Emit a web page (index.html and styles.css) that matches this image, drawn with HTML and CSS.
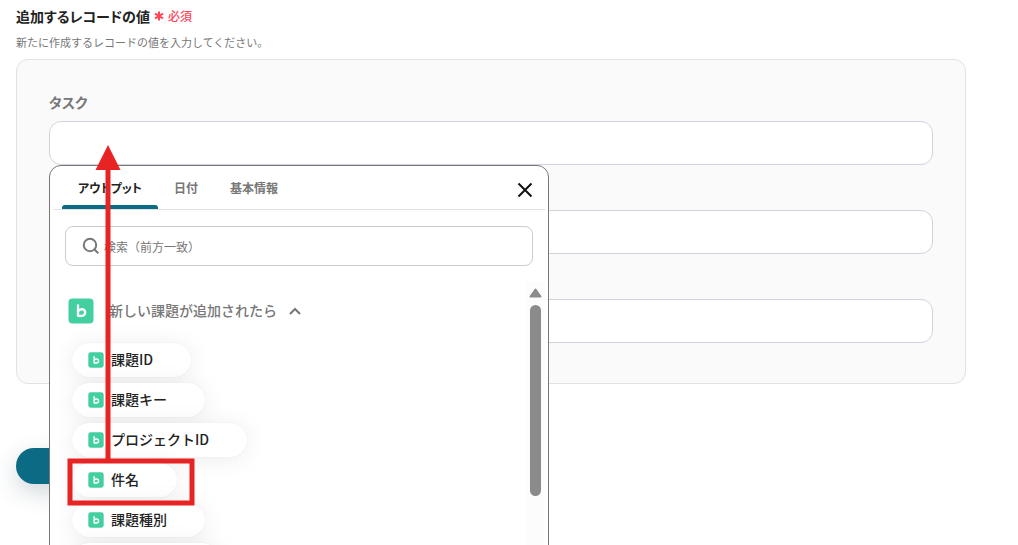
FILE: index.html
```html
<!DOCTYPE html>
<html lang="ja">
<head>
<meta charset="utf-8">
<meta name="viewport" content="width=device-width, initial-scale=1">
<title>追加するレコードの値</title>
<link rel="stylesheet" href="styles.css">
</head>
<body>
<svg class="sprite" aria-hidden="true">
  <symbol id="app" viewBox="0 0 26 26">
    <rect x=".5" y=".5" width="25" height="25" rx="4" fill="#43cf9f"/>
    <path d="M10 7.500v10.300h3.500c4.600 0 5-6 .4-6.600q-1.700 0-2.700 1.200" fill="none" stroke="#fff" stroke-width="2.300" stroke-linecap="round" stroke-linejoin="round"/>
  </symbol>
</svg>
<main class="page">
  <h1 class="title">追加するレコードの値 <span class="required"><svg class="star" viewBox="0 0 10 10" aria-hidden="true"><path d="M5 .5v9M1 2.700l8 4.600M9 2.700L1 7.300"/></svg>必須</span></h1>
  <p class="hint">新たに作成するレコードの値を入力してください。</p>
  <form class="form">
    <section class="panel">
      <div class="field">
        <label class="label" for="task">タスク</label>
        <input class="input" id="task" type="text">
        <div class="popup">
          <div class="tabs" role="tablist">
            <button class="tab active" type="button" role="tab" aria-selected="true">アウトプット</button>
            <button class="tab" type="button" role="tab">日付</button>
            <button class="tab" type="button" role="tab">基本情報</button>
            <button class="close" type="button" aria-label="閉じる"><svg viewBox="0 0 16 16"><path d="M1.500 1.500l13 13M14.500 1.500l-13 13"/></svg></button>
          </div>
          <div class="search">
            <svg class="lens" viewBox="0 0 18 18" aria-hidden="true"><circle cx="8" cy="8" r="6.200"/><path d="M12.500 12.500L16.300 16.300"/></svg>
            <input class="search-input" type="text" aria-label="検索" placeholder="検索（前方一致）">
          </div>
          <div class="results">
            <div class="list">
              <button class="group" type="button">
                <svg class="app-large" aria-hidden="true"><use href="#app"/></svg>
                <span class="group-name">新しい課題が追加されたら</span>
                <svg class="chevron" viewBox="0 0 12 8" aria-hidden="true"><path d="M1 7L6 2l5 5"/></svg>
              </button>
              <div class="chips">
                <button class="chip" type="button"><svg class="app-small" aria-hidden="true"><use href="#app"/></svg>課題ID</button>
                <button class="chip" type="button"><svg class="app-small" aria-hidden="true"><use href="#app"/></svg>課題キー</button>
                <button class="chip" type="button"><svg class="app-small" aria-hidden="true"><use href="#app"/></svg>プロジェクトID</button>
                <button class="chip" type="button"><svg class="app-small" aria-hidden="true"><use href="#app"/></svg>件名</button>
                <button class="chip" type="button"><svg class="app-small" aria-hidden="true"><use href="#app"/></svg>課題種別</button>
                <button class="chip wide" type="button" aria-label="次の項目"></button>
              </div>
            </div>
            <div class="scrollbar" aria-hidden="true">
              <svg class="scroll-up" viewBox="0 0 13 10"><path d="M6.500 1.500L11.500 8.500H1.500z"/></svg>
              <div class="thumb"></div>
            </div>
          </div>
          <svg class="arrow" viewBox="0 0 128 361" aria-hidden="true">
            <path class="shaft" d="M41 20v296"/>
            <path class="head" d="M41 0l12.500 25h-25z"/>
            <rect class="frame" x="3" y="316" width="122" height="42"/>
          </svg>
        </div>
      </div>
      <div class="field">
        <label class="label" for="second"></label>
        <input class="input" id="second" type="text">
      </div>
      <div class="field">
        <label class="label" for="third"></label>
        <input class="input" id="third" type="text">
      </div>
    </section>
    <button class="submit" type="button" aria-label="次へ"></button>
  </form>
</main>
</body>
</html>
```
FILE: styles.css
```css
* { box-sizing: border-box; }

body {
  margin: 0;
  height: 100vh;
  overflow: hidden;
  background: #fff;
  color: #222;
  font-family: "Noto Sans CJK JP", "Noto Sans", sans-serif;
  font-size: 14px;
  line-height: 20px;
}

button, input { font: inherit; font-feature-settings: inherit; color: inherit; }
button { border: 0; padding: 0; background: none; }
svg { display: block; flex: none; }

.sprite { position: absolute; width: 0; height: 0; }

.page { padding: 6px 52px 0 16px; }

.title, .label, .tab { font-feature-settings: "palt"; }

.title {
  display: flex;
  align-items: center;
  gap: 4px;
  margin: 0;
  font-size: 14px;
  font-weight: 600;
}
.required {
  display: flex;
  align-items: center;
  gap: 4px;
  color: #ff4658;
  font-size: 12px;
  font-weight: 500;
}
.star { width: 10px; height: 10px; stroke: #ff4658; stroke-width: 2; }

.hint { margin: 6px 0 7px; color: #777; font-size: 11px; }

.panel {
  display: flex;
  flex-direction: column;
  gap: 16px;
  padding: 32px 32px 40px;
  border: 1px solid #e0e2e8;
  border-radius: 12px;
  background: #fafafa;
}
.field { position: relative; display: flex; flex-direction: column; gap: 9px; }
.label { height: 20px; color: #777; font-size: 14px; font-weight: 600; }
.input {
  width: 100%;
  height: 44px;
  padding: 0 16px;
  border: 1px solid #d0d4dc;
  border-radius: 12px;
  background: #fff;
}

.submit {
  display: block;
  width: 120px;
  height: 36px;
  margin-top: 64px;
  border-radius: 18px;
  background: #0b6a84;
  box-shadow: 0 8px 24px rgba(20, 50, 70, .2);
}

.popup {
  position: absolute;
  z-index: 1;
  top: 100%;
  left: 0;
  width: 500px;
  padding: 0 3px;
  border: 1px solid #777;
  border-radius: 12px;
  background: #fff;
}

.tabs {
  display: flex;
  height: 44px;
  padding: 0 12px 0 9px;
  border-bottom: 1px solid #e2e2e2;
}
.tab {
  height: 43px;
  padding: 1px 16px 0;
  color: #777;
  font-size: 12px;
  font-weight: 600;
}
.tab.active { position: relative; color: #222; }
.tab.active::after {
  content: "";
  position: absolute;
  left: 0;
  right: 0;
  bottom: 0;
  height: 4px;
  border-radius: 3px 3px 0 0;
  background: #0b6a84;
}
.close { margin-left: auto; padding-top: 5px; }
.close svg { width: 16px; height: 16px; stroke: #111; stroke-width: 2; }

.search {
  display: flex;
  align-items: center;
  gap: 4px;
  height: 40px;
  margin: 16px 12px;
  padding: 0 16px;
  border: 1px solid #ccc;
  border-radius: 8px;
}
.lens { width: 18px; height: 18px; fill: none; stroke: #777; stroke-width: 2; }
.search-input {
  flex: 1;
  min-width: 0;
  height: 24px;
  padding: 0;
  border: 0;
  outline: 0;
  background: none;
  font-size: 12px;
}
.search-input::placeholder { color: #777; opacity: 1; }

.results { display: flex; height: 400px; overflow: hidden; }
.list { flex: 1; padding: 16px 15px; }
.group { display: flex; align-items: center; height: 26px; color: #777; font-weight: 500; }
.group-name { margin: 0 12px 2px 15px; }
.app-large { width: 26px; height: 26px; }
.app-small { width: 16px; height: 16px; margin-top: 2px; }
.chevron { width: 12px; height: 8px; fill: none; stroke: #777; stroke-width: 2; }

.chips {
  display: flex;
  flex-direction: column;
  align-items: flex-start;
  gap: 6px;
  padding: 19px 4px;
}
.chip {
  display: flex;
  align-items: center;
  gap: 7px;
  height: 34px;
  padding: 0 38px 2px 16px;
  border-radius: 17px;
  background: #fff;
  box-shadow: 0 2px 24px rgba(0, 0, 0, .08), 0 0 2px rgba(0, 0, 0, .06);
  font-weight: 500;
  white-space: nowrap;
}
.chip.wide { width: 147px; }

.scrollbar {
  display: flex;
  flex-direction: column;
  align-items: center;
  gap: 7px;
  width: 19px;
  padding-top: 6px;
  background: #fcfcfc;
}
.scroll-up { width: 13px; height: 10px; fill: #8b8b8b; stroke: #8b8b8b; stroke-width: 2; stroke-linejoin: round; }
.thumb { width: 11px; height: 191px; border-radius: 6px; background: #8b8b8b; }

.arrow { position: absolute; z-index: 2; top: -21px; left: 17px; width: 128px; height: 361px; fill: none; }
.shaft { stroke: #e72323; stroke-width: 5; }
.head { fill: #e72323; }
.frame { stroke: #e72323; stroke-width: 5; }
```
